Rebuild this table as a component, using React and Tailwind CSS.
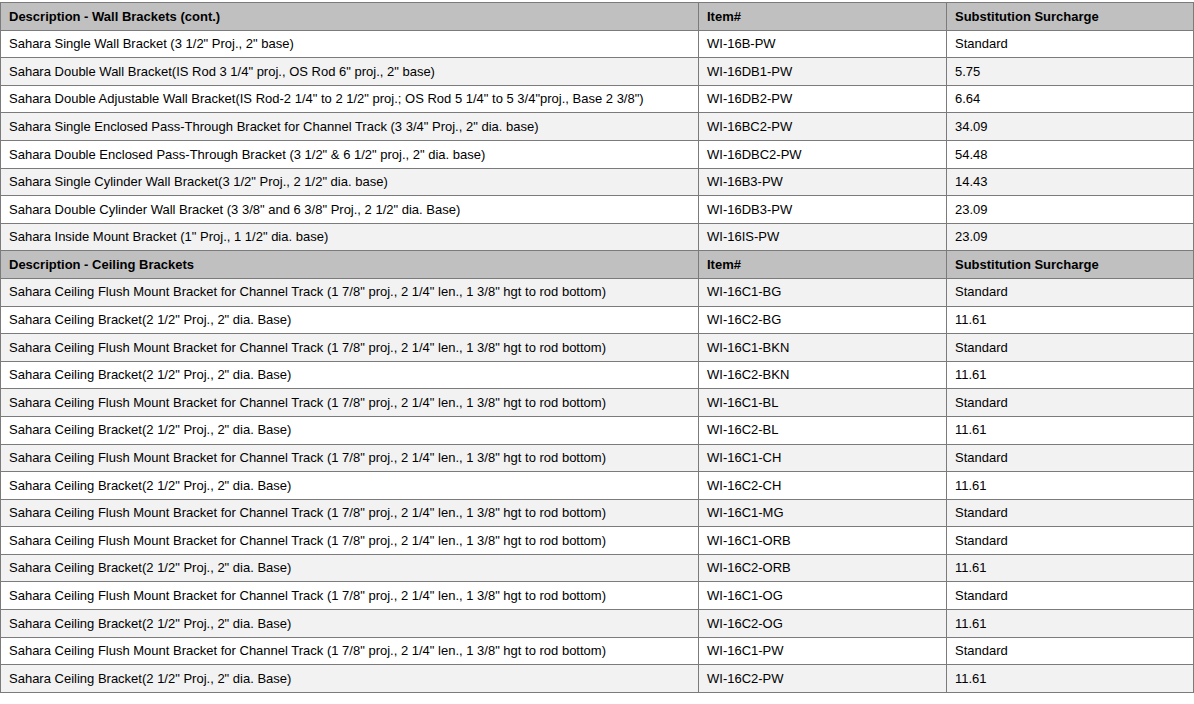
const wallRows = [
  ["Sahara Single Wall Bracket (3 1/2\" Proj., 2\" base)", "WI-16B-PW", "Standard"],
  ["Sahara Double Wall Bracket(IS Rod 3 1/4\" proj., OS Rod 6\" proj., 2\" base)", "WI-16DB1-PW", "5.75"],
  ["Sahara Double Adjustable Wall Bracket(IS Rod-2 1/4\" to 2 1/2\" proj.; OS Rod 5 1/4\" to 5 3/4\"proj., Base 2 3/8\")", "WI-16DB2-PW", "6.64"],
  ["Sahara Single Enclosed Pass-Through Bracket for Channel Track (3 3/4\" Proj., 2\" dia. base)", "WI-16BC2-PW", "34.09"],
  ["Sahara Double Enclosed Pass-Through Bracket (3 1/2\" & 6 1/2\" proj., 2\" dia. base)", "WI-16DBC2-PW", "54.48"],
  ["Sahara Single Cylinder Wall Bracket(3 1/2\" Proj., 2 1/2\" dia. base)", "WI-16B3-PW", "14.43"],
  ["Sahara Double Cylinder Wall Bracket (3 3/8\" and 6 3/8\" Proj., 2 1/2\" dia. Base)", "WI-16DB3-PW", "23.09"],
  ["Sahara Inside Mount Bracket (1\" Proj., 1 1/2\" dia. base)", "WI-16IS-PW", "23.09"],
];

const flush = "Sahara Ceiling Flush Mount Bracket for Channel Track (1 7/8\" proj., 2 1/4\" len., 1 3/8\" hgt to rod bottom)";
const ceil = "Sahara Ceiling Bracket(2 1/2\" Proj., 2\" dia. Base)";

const ceilingRows = [
  [flush, "WI-16C1-BG", "Standard"],
  [ceil, "WI-16C2-BG", "11.61"],
  [flush, "WI-16C1-BKN", "Standard"],
  [ceil, "WI-16C2-BKN", "11.61"],
  [flush, "WI-16C1-BL", "Standard"],
  [ceil, "WI-16C2-BL", "11.61"],
  [flush, "WI-16C1-CH", "Standard"],
  [ceil, "WI-16C2-CH", "11.61"],
  [flush, "WI-16C1-MG", "Standard"],
  [flush, "WI-16C1-ORB", "Standard"],
  [ceil, "WI-16C2-ORB", "11.61"],
  [flush, "WI-16C1-OG", "Standard"],
  [ceil, "WI-16C2-OG", "11.61"],
  [flush, "WI-16C1-PW", "Standard"],
  [ceil, "WI-16C2-PW", "11.61"],
];

function HeaderRow({ title }) {
  return (
    <tr className="h-[27.6px] bg-[#c0c0c0] font-bold">
      <td className="border border-[#7b7b7b] px-2 py-0">{title}</td>
      <td className="border border-[#7b7b7b] px-2 py-0">Item#</td>
      <td className="border border-[#7b7b7b] px-2 py-0">Substitution Surcharge</td>
    </tr>
  );
}

function Row({ cells, shaded }) {
  return (
    <tr className={shaded ? "h-[27.6px] bg-[#f2f2f2]" : "h-[27.6px] bg-white"}>
      {cells.map((c, i) => (
        <td key={i} className="border border-[#7b7b7b] px-2 py-0 whitespace-nowrap">{c}</td>
      ))}
    </tr>
  );
}

export default function App() {
  return (
    <div className="w-[1194px] h-[704px] bg-white pt-[2px] font-['Liberation_Sans',Arial,sans-serif] text-[13px] text-black">
      <table className="w-[1194px] border-collapse table-fixed">
        <colgroup>
          <col className="w-[698px]" />
          <col className="w-[248px]" />
          <col />
        </colgroup>
        <tbody>
          <HeaderRow title="Description - Wall Brackets (cont.)" />
          {wallRows.map((r, i) => (
            <Row key={"w" + i} cells={r} shaded={i % 2 === 1} />
          ))}
          <HeaderRow title="Description - Ceiling Brackets" />
          {ceilingRows.map((r, i) => (
            <Row key={"c" + i} cells={r} shaded={i % 2 === 0} />
          ))}
        </tbody>
      </table>
    </div>
  );
}
